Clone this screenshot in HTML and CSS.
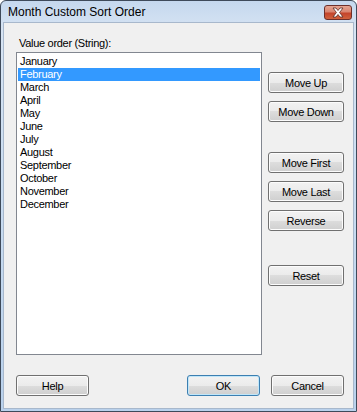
FILE: index.html
```html
<!DOCTYPE html>
<html>
<head>
<meta charset="utf-8">
<link rel="stylesheet" href="styles.css">
</head>
<body>
<div class="window">
  <div class="titlebar">
    <span class="title">Month Custom Sort Order</span>
    <span class="close">
      <svg width="28" height="15" viewBox="0 0 28 15">
        <path d="M9 3 L12 3 L14 5.5 L16 3 L19 3 L15.6 7.5 L19 12 L16 12 L14 9.5 L12 12 L9 12 L12.4 7.5 Z" fill="#ffffff" stroke="#5a2a22" stroke-width="0.8" stroke-linejoin="round"/>
      </svg>
    </span>
  </div>
  <div class="client">
    <div class="label">Value order (String):</div>
    <div class="main">
      <div class="listbox">
        <div class="item">January</div>
        <div class="item selected">February</div>
        <div class="item">March</div>
        <div class="item">April</div>
        <div class="item">May</div>
        <div class="item">June</div>
        <div class="item">July</div>
        <div class="item">August</div>
        <div class="item">September</div>
        <div class="item">October</div>
        <div class="item">November</div>
        <div class="item">December</div>
      </div>
      <div class="side">
        <button class="btn">Move Up</button>
        <button class="btn gap-s">Move Down</button>
        <button class="btn gap-l">Move First</button>
        <button class="btn gap-s">Move Last</button>
        <button class="btn gap-s">Reverse</button>
        <button class="btn gap-xl">Reset</button>
      </div>
    </div>
    <div class="footer">
      <button class="btn">Help</button>
      <div class="spacer"></div>
      <button class="btn default">OK</button>
      <button class="btn">Cancel</button>
    </div>
  </div>
</div>
</body>
</html>
```
FILE: styles.css
```css
html, body {
  margin: 0;
  padding: 0;
  background: #ffffff;
}
.window {
  width: 357px;
  height: 412px;
  box-sizing: border-box;
  border: 1px solid #3e4a5a;
  border-radius: 6px 6px 0 0;
  background: linear-gradient(to bottom, #c5d8ee 0px, #d7e4f3 30px, #c9dcf1 200px, #b9d1ec 412px);
  padding: 0 2px 2px 2px;
  display: flex;
  flex-direction: column;
  font-family: "Liberation Sans", Arial, sans-serif;
  font-size: 11px;
  letter-spacing: -0.3px;
  color: #000;
}
.titlebar {
  height: 21px;
  display: flex;
  align-items: center;
  position: relative;
}
.title {
  font-size: 12px;
  letter-spacing: 0;
  padding-left: 5px;
  color: #000;
  margin-top: 1px;
}
.close {
  position: absolute;
  right: 2px;
  top: 4px;
  width: 28px;
  height: 15px;
  box-sizing: border-box;
  border: 1px solid #6d2f2a;
  border-radius: 3px;
  background: linear-gradient(to bottom, #e5a491 0%, #d98570 45%, #c4442b 55%, #d0613c 100%);
  display: flex;
}
.close svg {
  margin: -1px;
}
.client {
  flex: 1;
  background: #f0f0f0;
  border: 1px solid #a8b8cc;
  padding: 14px 9px 0 12px;
  display: flex;
  flex-direction: column;
}
.label {
  height: 15px;
  padding-left: 3px;
  line-height: 13px;
}
.main {
  display: flex;
  gap: 6px;
}
.listbox {
  width: 246px;
  height: 303px;
  box-sizing: border-box;
  border: 1px solid #828790;
  background: #fff;
  padding: 2px 1px;
}
.item {
  height: 13px;
  line-height: 13px;
  padding-left: 2px;
}
.item.selected {
  background: #3399ff;
  color: #fff;
}
.side {
  display: flex;
  flex-direction: column;
  padding-top: 20px;
}
.btn {
  width: 76px;
  height: 21px;
  box-sizing: border-box;
  border: 1px solid #707070;
  border-radius: 3px;
  background: linear-gradient(to bottom, #f2f2f2 0%, #ebebeb 50%, #dddddd 50%, #cfcfcf 100%);
  box-shadow: inset 0 0 0 1px #fcfcfc;
  font-family: "Liberation Sans", Arial, sans-serif;
  font-size: 11px;
  letter-spacing: -0.3px;
  color: #000;
  padding: 0;
  margin: 0;
}
.gap-s { margin-top: 8px; }
.gap-l { margin-top: 30px; }
.gap-xl { margin-top: 34px; }
.footer {
  display: flex;
  margin-top: 20px;
}
.footer .btn {
  width: 73px;
}
.spacer { flex: 1; }
.btn.default {
  border-color: #3c7fb1;
  box-shadow: inset 0 0 0 1px #c0e6f9;
  margin-right: 11px;
}
```
